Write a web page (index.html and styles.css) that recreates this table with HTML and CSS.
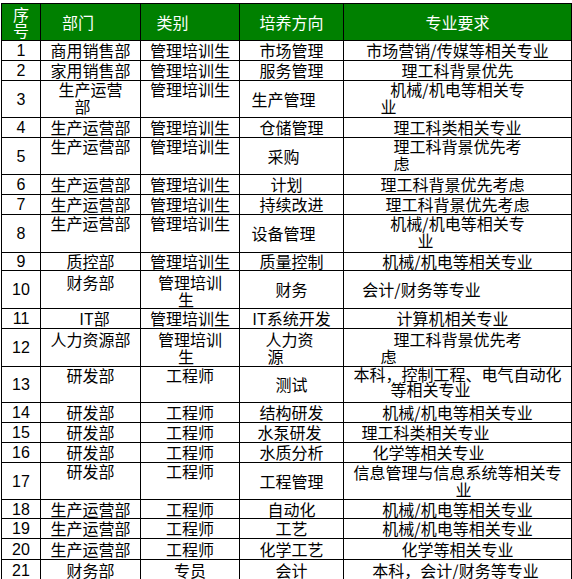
FILE: index.html
```html
<!DOCTYPE html>
<html lang="zh">
<head>
<meta charset="utf-8">
<title>岗位需求</title>
<link rel="stylesheet" href="styles.css">
</head>
<body>
<div class="sheet">
  <div class="c h tight"><span class="ln">序</span><span class="ln">号</span></div>
  <div class="c h"><span class="ln sl12">部门</span></div>
  <div class="c h"><span class="ln sl17">类别</span></div>
  <div class="c h"><span class="ln">培养方向</span></div>
  <div class="c h"><span class="ln">专业要求</span></div>

  <div class="c num">1</div>
  <div class="c">商用销售部</div>
  <div class="c">管理培训生</div>
  <div class="c">市场管理</div>
  <div class="c">市场营销/传媒等相关专业</div>

  <div class="c num">2</div>
  <div class="c">家用销售部</div>
  <div class="c">管理培训生</div>
  <div class="c">服务管理</div>
  <div class="c">理工科背景优先</div>

  <div class="c num">3</div>
  <div class="c top"><span class="ln">生产运营</span><span class="ln sl8">部</span></div>
  <div class="c top">管理培训生</div>
  <div class="c"><span class="ln sl8">生产管理</span></div>
  <div class="c top"><span class="ln">机械/机电等相关专</span><span class="ln sl69">业</span></div>

  <div class="c num">4</div>
  <div class="c">生产运营部</div>
  <div class="c">管理培训生</div>
  <div class="c">仓储管理</div>
  <div class="c">理工科类相关专业</div>

  <div class="c num">5</div>
  <div class="c top">生产运营部</div>
  <div class="c top">管理培训生</div>
  <div class="c"><span class="ln sl8">采购</span></div>
  <div class="c top"><span class="ln">理工科背景优先考</span><span class="ln sl56">虑</span></div>

  <div class="c num">6</div>
  <div class="c">生产运营部</div>
  <div class="c">管理培训生</div>
  <div class="c"><span class="ln sl5">计划</span></div>
  <div class="c"><span class="ln sl5">理工科背景优先考虑</span></div>

  <div class="c num">7</div>
  <div class="c">生产运营部</div>
  <div class="c">管理培训生</div>
  <div class="c">持续改进</div>
  <div class="c">理工科背景优先考虑</div>

  <div class="c num">8</div>
  <div class="c top">生产运营部</div>
  <div class="c top">管理培训生</div>
  <div class="c"><span class="ln sl8">设备管理</span></div>
  <div class="c top"><span class="ln">机械/机电等相关专</span><span class="ln sl32">业</span></div>

  <div class="c num">9</div>
  <div class="c">质控部</div>
  <div class="c">管理培训生</div>
  <div class="c">质量控制</div>
  <div class="c">机械/机电等相关专业</div>

  <div class="c num">10</div>
  <div class="c top pad3">财务部</div>
  <div class="c top pad3"><span class="ln">管理培训</span><span class="ln sl4">生</span></div>
  <div class="c">财务</div>
  <div class="c"><span class="ln sl36">会计/财务等专业</span></div>

  <div class="c num">11</div>
  <div class="c"><span class="ln sr4">IT部</span></div>
  <div class="c">管理培训生</div>
  <div class="c">IT系统开发</div>
  <div class="c"><span class="ln sl5">计算机相关专业</span></div>

  <div class="c num">12</div>
  <div class="c top pad2">人力资源部</div>
  <div class="c top pad2"><span class="ln">管理培训</span><span class="ln sl4">生</span></div>
  <div class="c top pad2"><span class="ln sl2">人力资</span><span class="ln sl16">源</span></div>
  <div class="c top pad2"><span class="ln">理工科背景优先考</span><span class="ln sl69">虑</span></div>

  <div class="c num">13</div>
  <div class="c top">研发部</div>
  <div class="c top">工程师</div>
  <div class="c">测试</div>
  <div class="c top tight2"><span class="ln">本科，控制工程、电气自动化</span><span class="ln sl27">等相关专业</span></div>

  <div class="c num">14</div>
  <div class="c">研发部</div>
  <div class="c">工程师</div>
  <div class="c">结构研发</div>
  <div class="c">机械/机电等相关专业</div>

  <div class="c num">15</div>
  <div class="c">研发部</div>
  <div class="c">工程师</div>
  <div class="c"><span class="ln sl2">水泵研发</span></div>
  <div class="c"><span class="ln sl32">理工科类相关专业</span></div>

  <div class="c num">16</div>
  <div class="c">研发部</div>
  <div class="c">工程师</div>
  <div class="c">水质分析</div>
  <div class="c"><span class="ln sl29">化学等相关专业</span></div>

  <div class="c num">17</div>
  <div class="c top">研发部</div>
  <div class="c top">工程师</div>
  <div class="c">工程管理</div>
  <div class="c top pad1"><span class="ln">信息管理与信息系统等相关专</span><span class="ln sr6">业</span></div>

  <div class="c num">18</div>
  <div class="c">生产运营部</div>
  <div class="c">工程师</div>
  <div class="c">自动化</div>
  <div class="c">机械/机电等相关专业</div>

  <div class="c num">19</div>
  <div class="c">生产运营部</div>
  <div class="c">工程师</div>
  <div class="c">工艺</div>
  <div class="c">机械/机电等相关专业</div>

  <div class="c num">20</div>
  <div class="c">生产运营部</div>
  <div class="c">工程师</div>
  <div class="c">化学工艺</div>
  <div class="c">化学等相关专业</div>

  <div class="c num">21</div>
  <div class="c">财务部</div>
  <div class="c">专员</div>
  <div class="c">会计</div>
  <div class="c"><span class="ln sl2">本科，会计/财务等专业</span></div>
</div>
</body>
</html>
```

FILE: styles.css
```css
* {
  box-sizing: border-box;
}

html,
body {
  margin: 0;
  padding: 0;
  background: #ffffff;
}

body {
  font-family: "Noto Sans CJK SC", "Liberation Sans", sans-serif;
  font-size: 16px;
  color: #000000;
}

.sheet {
  margin: 3px 0 0 1px;
  width: 571px;
  display: grid;
  grid-template-columns: 39px 100px 99px 104px 228px;
  grid-template-rows:
    37px 20px 20px 37px 20px 37px 20px 20px 38px 18px 38px
    20px 38px 36px 20px 20px 20px 37px 19px 20px 21px 21px;
  border-left: 1px solid #000000;
  border-top: 1px solid #000000;
}

.c {
  border-right: 1px solid #000000;
  border-bottom: 1px solid #000000;
  display: flex;
  flex-direction: column;
  justify-content: center;
  align-items: center;
  line-height: 17px;
  white-space: nowrap;
}

.h {
  background: #008000;
  color: #ffffff;
}

.tight {
  line-height: 16px;
}

.tight2 {
  line-height: 15px;
}

.num {
  font-family: "Liberation Sans", Arial, sans-serif;
}

.top {
  justify-content: flex-start;
}

.pad1 {
  padding-top: 1px;
}

.pad2 {
  padding-top: 2px;
}

.pad3 {
  padding-top: 3px;
}

.ln {
  display: block;
  text-align: center;
}

/* shift a line's centre left (sl) or right (sr) by N px */
.sl2 { padding-right: 4px; }
.sl4 { padding-right: 8px; }
.sl5 { padding-right: 10px; }
.sl8 { padding-right: 16px; }
.sl12 { padding-right: 25px; }
.sl16 { padding-right: 32px; }
.sl17 { padding-right: 35px; }
.sl27 { padding-right: 54px; }
.sl29 { padding-right: 58px; }
.sl32 { padding-right: 64px; }
.sl36 { padding-right: 72px; }
.sl56 { padding-right: 112px; }
.sl69 { padding-right: 138px; }
.sr4 { padding-left: 8px; }
.sr6 { padding-left: 12px; }
```
